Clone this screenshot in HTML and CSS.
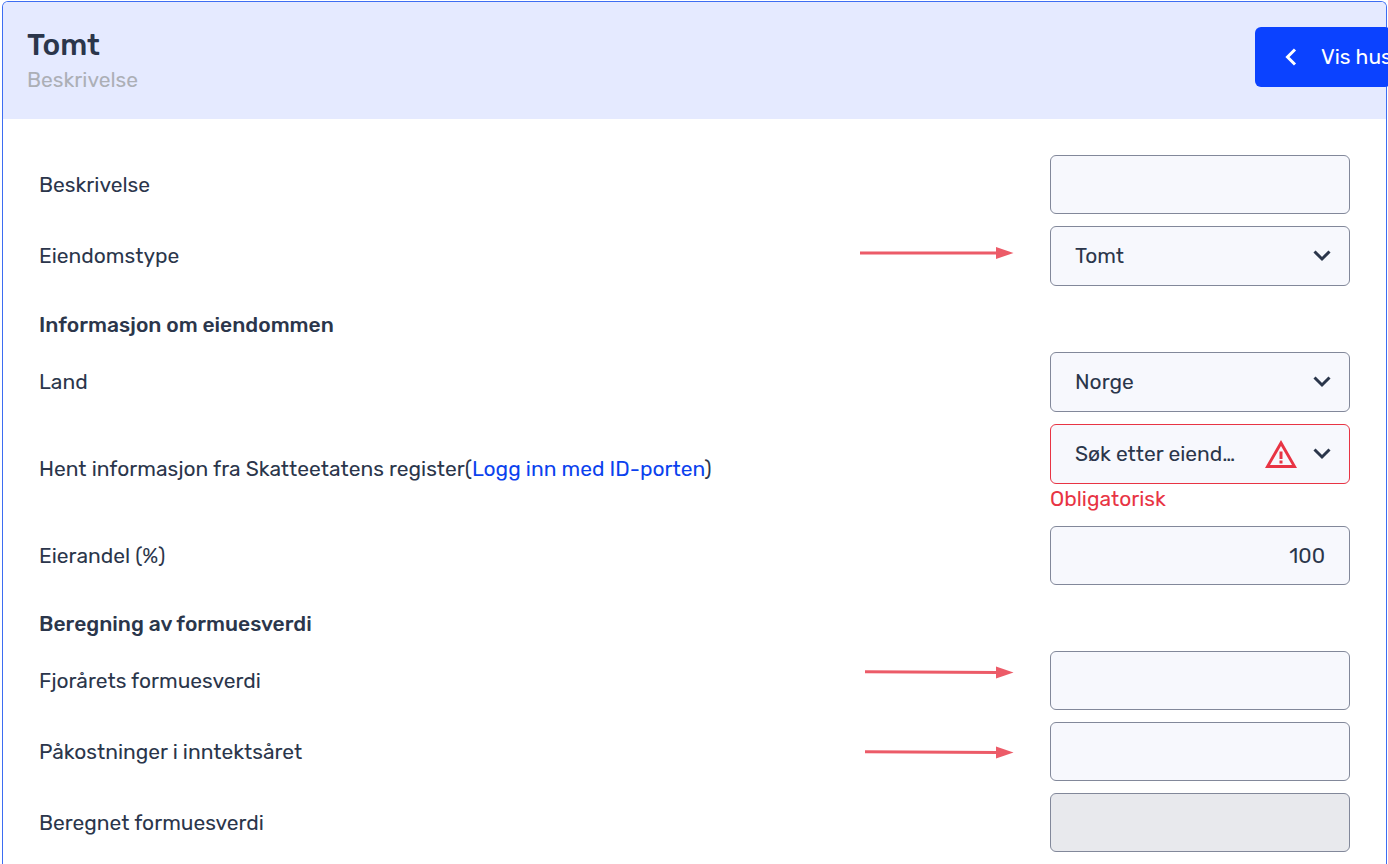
FILE: index.html
```html
<!DOCTYPE html>
<html lang="nb">
<head>
<meta charset="utf-8">
<title>Tomt</title>
<link rel="stylesheet" href="styles.css">
</head>
<body>
<main class="card">
  <header class="card-header">
    <div class="titles">
      <h1 class="title">Tomt</h1>
      <p class="subtitle">Beskrivelse</p>
    </div>
    <button class="back" type="button">
      <svg class="back-icon" viewBox="0 0 12 18" aria-hidden="true"><path d="M10 1.500 2.500 9l7.500 7.500"/></svg>
      <span>Vis hus</span>
    </button>
  </header>
  <form class="form">
    <div class="row">
      <label class="label" for="desc">Beskrivelse</label>
      <div class="field"><input class="control" id="desc" type="text"></div>
    </div>
    <div class="row">
      <label class="label" for="type">Eiendomstype</label>
      <svg class="arrow" viewBox="0 0 154 59" aria-hidden="true"><path class="shaft" d="M0 26H138"/><path class="head" d="M136 20 153.500 26 136 32z"/></svg>
      <div class="field">
        <select class="control" id="type"><option>Tomt</option></select>
        <svg class="chevron" viewBox="0 0 18 12" aria-hidden="true"><path d="M1.500 1.500 9 9l7.500-7.500"/></svg>
      </div>
    </div>
    <h2 class="section">Informasjon om eiendommen</h2>
    <div class="row">
      <label class="label" for="country">Land</label>
      <div class="field">
        <select class="control" id="country"><option>Norge</option></select>
        <svg class="chevron" viewBox="0 0 18 12" aria-hidden="true"><path d="M1.500 1.500 9 9l7.500-7.500"/></svg>
      </div>
    </div>
    <div class="row">
      <div class="label"><label for="search">Hent informasjon fra Skatteetatens register</label>(<a class="link" href="#">Logg inn med ID-porten</a>)</div>
      <div class="field">
        <select class="control invalid" id="search" aria-describedby="search-error"><option>Søk etter eiend…</option></select>
        <svg class="warning" viewBox="0 0 32 28" aria-hidden="true"><path class="triangle" fill-rule="evenodd" d="M16 0 32 28H0zM16 6 5 25H27z"/><path class="triangle" d="M14.500 11.500h3v7.500h-3zM14.500 20.500h3v3h-3z"/></svg>
        <svg class="chevron" viewBox="0 0 18 12" aria-hidden="true"><path d="M1.500 1.500 9 9l7.500-7.500"/></svg>
        <p class="error" id="search-error">Obligatorisk</p>
      </div>
    </div>
    <div class="row">
      <label class="label" for="share">Eierandel (%)</label>
      <div class="field"><input class="control number" id="share" type="text" value="100"></div>
    </div>
    <h2 class="section">Beregning av formuesverdi</h2>
    <div class="row">
      <label class="label" for="last">Fjorårets formuesverdi</label>
      <svg class="arrow" viewBox="0 0 154 59" aria-hidden="true"><path class="shaft" d="M5 20.800 138 21.500"/><path class="head" d="M136 15.500 153.500 21.500 136 27.500z"/></svg>
      <div class="field"><input class="control number" id="last" type="text"></div>
    </div>
    <div class="row">
      <label class="label" for="costs">Påkostninger i inntektsåret</label>
      <svg class="arrow" viewBox="0 0 154 59" aria-hidden="true"><path class="shaft" d="M5 29.800 138 30.500"/><path class="head" d="M136 24.500 153.500 30.500 136 36.500z"/></svg>
      <div class="field"><input class="control number" id="costs" type="text"></div>
    </div>
    <div class="row">
      <label class="label" for="total">Beregnet formuesverdi</label>
      <div class="field"><input class="control number" id="total" type="text" disabled></div>
    </div>
  </form>
</main>
</body>
</html>
```
FILE: styles.css
```css
* { box-sizing: border-box; }

body {
  margin: 0;
  padding: 1px 1px 0 2px;
  overflow-x: hidden;
  background: #fff;
  color: #2b364b;
  font: 21px/30px Rubik, Roboto, sans-serif;
}

.card {
  min-height: calc(100vh - 1px);
  border: 1px solid #3d6df2;
  border-bottom: 0;
  border-radius: 6px 6px 0 0;
}

.card-header {
  display: flex;
  justify-content: space-between;
  align-items: flex-start;
  padding: 25px 0 24px 24px;
  border-radius: 5px 5px 0 0;
  background: #e5eaff;
}

.titles { min-width: 0; }

.title {
  margin: 0;
  font-size: 30px;
  line-height: 36px;
  font-weight: 500;
}

.subtitle {
  margin: 2px 0 0;
  color: #acafb6;
}

.back {
  display: flex;
  flex: none;
  align-items: center;
  gap: 24px;
  width: 136px;
  height: 60px;
  margin-right: -5px;
  padding: 0 0 0 30px;
  border: 0;
  border-radius: 6px;
  background: #0b42ff;
  color: #fff;
  font: inherit;
  white-space: nowrap;
  overflow: hidden;
}

.back-icon {
  flex: none;
  width: 12px;
  height: 18px;
}

.back-icon path,
.chevron path {
  fill: none;
  stroke: currentColor;
  stroke-width: 3;
}

.form {
  display: flex;
  flex-direction: column;
  gap: 12px;
  padding: 36px 36px 12px;
}

.row {
  display: flex;
  align-items: center;
  gap: 36px;
}

.label {
  flex: 1;
  min-width: 0;
}

.link {
  color: #0b42ee;
  text-decoration: none;
}

.section {
  margin: 0;
  padding-top: 12px;
  font-size: 21px;
  line-height: 30px;
  font-weight: 500;
}

.field {
  position: relative;
  flex: none;
  width: 300px;
}

.control {
  display: block;
  width: 100%;
  height: 59px;
  padding: 0 24px;
  border: 1px solid #82889a;
  border-radius: 6px;
  appearance: none;
  background: #f7f8fd;
  color: inherit;
  font: inherit;
}

select.control { height: 60px; }

.control:disabled { background: #e8e9ed; }

.control.invalid { border-color: #e83444; }

.number { text-align: right; }

.chevron {
  position: absolute;
  top: 24px;
  right: 19px;
  width: 18px;
  height: 12px;
  pointer-events: none;
}

.warning {
  position: absolute;
  top: 16px;
  right: 53px;
  width: 32px;
  height: 28px;
  pointer-events: none;
}

.triangle { fill: #e83444; }

.error {
  margin: 0;
  color: #e83444;
}

.arrow {
  flex: none;
  width: 154px;
  height: 59px;
}

.shaft {
  fill: none;
  stroke: #ec5b68;
  stroke-width: 3;
}

.head { fill: #ec5b68; }
```
